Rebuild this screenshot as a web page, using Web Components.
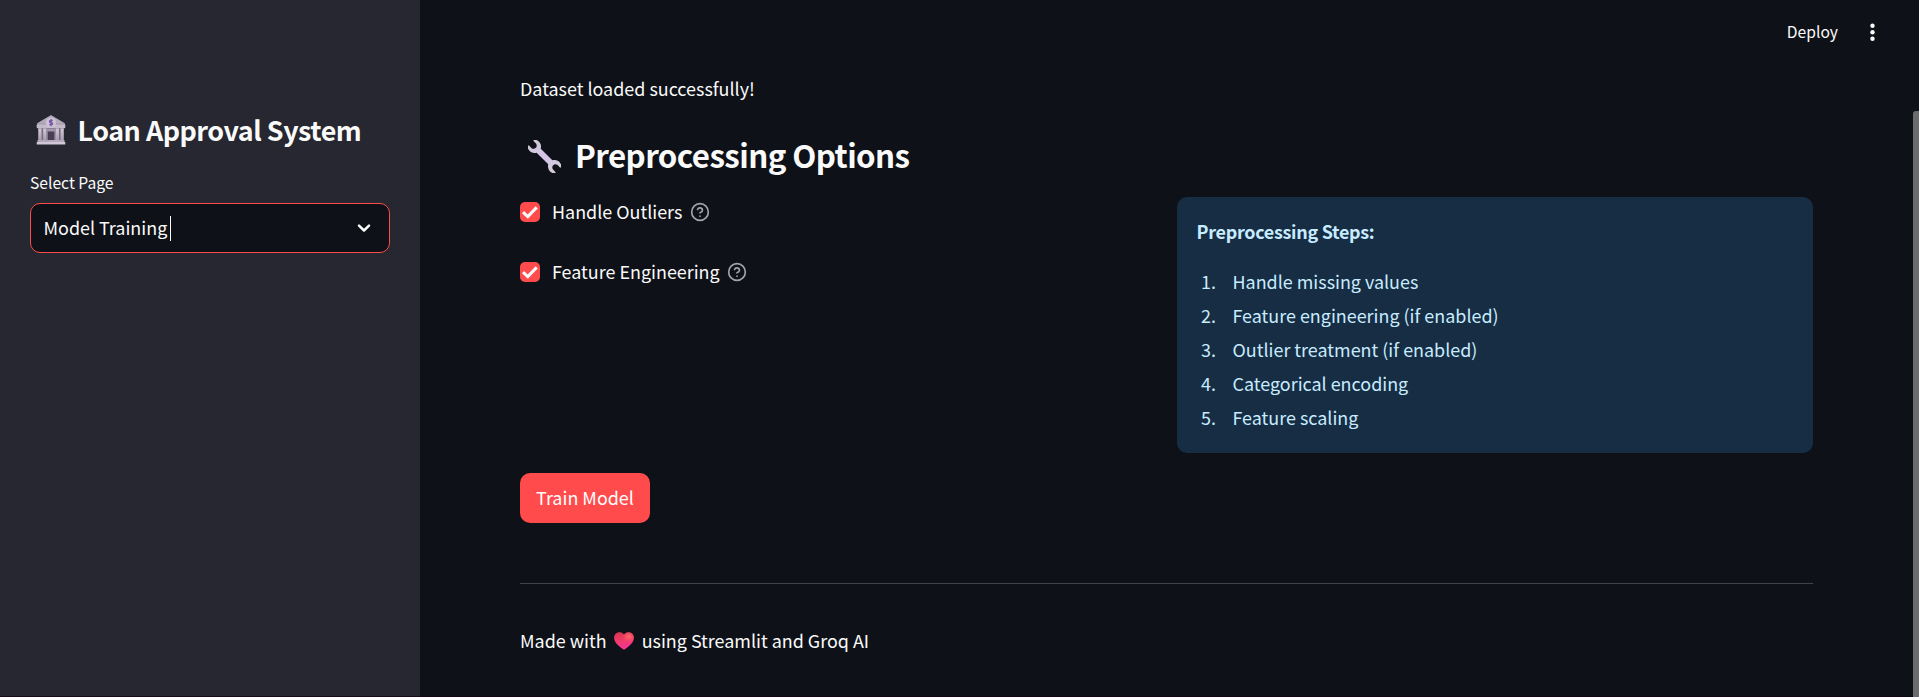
<!DOCTYPE html>
<html lang="en">
<head>
<meta charset="utf-8">
<title>Loan Approval System</title>
<style>
html,body{margin:0;height:100%;overflow:hidden;background:#0e1117}
body{font-family:"Noto Sans CJK SC","Noto Sans",sans-serif;color:#fafafa;font-size:17.930px}
</style>
</head>
<body>
<loan-app></loan-app>
<script>
const define = (name, html) => customElements.define(name, class extends HTMLElement {
  constructor() {
    super();
    const t = document.createElement('template');
    t.innerHTML = html;
    this.attachShadow({mode: 'open'}).append(t.content.cloneNode(true));
  }
});

define('bank-icon', `<style>:host{display:block;width:30px;height:32px}svg{display:block}</style>
<svg width="30" height="31" viewBox="0 0 30 31">
<defs><linearGradient id="g" x1="0" y1="0" x2="0" y2="1"><stop offset="0" stop-color="#d2cad8"/><stop offset="1" stop-color="#a79caf"/></linearGradient></defs>
<rect x="2" y="12" width="26" height="15" fill="#796d84"/>
<path d="M15 .2 29 8.600V12H1V8.600Z" fill="#a499ad"/>
<path d="M15 .2 29 8.600H1Z" fill="#b3a9ba"/>
<rect x=".7" y="9.500" width="28.600" height="3.700" rx=".8" fill="#c3bac9"/>
<circle cx="15" cy="7.600" r="5.200" fill="#cbc3d2"/>
<path d="M16.700 5.500h-2.200q-1 0-1 1t1 1.100h1q1 .1 1 1.100t-1 1h-2.200M15 4v7.200" fill="none" stroke="#7854a7" stroke-width="1.300"/>
<g fill="url(#g)"><rect x="2.500" y="13.500" width="3" height="12.500"/><rect x="7.200" y="13.500" width="3.200" height="12.500"/><rect x="19.700" y="13.500" width="3.200" height="12.500"/><rect x="24.600" y="13.500" width="3" height="12.500"/></g>
<rect x="10.400" y="14" width="9.300" height="12" fill="#a297aa"/>
<rect x="11.700" y="16.500" width="6.700" height="10" fill="#4a3d55"/>
<rect x="1.500" y="25" width="27" height="2.500" fill="#b3a9bb"/>
<rect x=".7" y="27" width="28.600" height="2.500" rx=".5" fill="#d0c8d6"/>
</svg>`);

define('wrench-icon', `<style>:host{display:block;width:33px;height:33px}svg{display:block}</style>
<svg width="33" height="33" viewBox="0 0 33 33">
<defs><linearGradient id="w" x1="0" y1="0" x2="1" y2="0"><stop offset="0" stop-color="#cfc9d6"/><stop offset=".5" stop-color="#d5c5ea"/><stop offset="1" stop-color="#d2ccd8"/></linearGradient></defs>
<g transform="rotate(45 16.500 16.500)" fill="url(#w)">
<path d="M-3 12.100C-1.500 10.300 1 9.600 3.600 10.100 5.900 10.600 7.300 11.900 8.300 13.600H24.700C25.700 11.900 27.200 10.600 29.400 10.100 32 9.600 34.500 10.300 36 12.100L35.500 13.300H31.500Q28.800 14.200 28.800 16.500T31.500 19.700H35.500L36 20.900C34.500 22.700 32 23.400 29.400 22.900 27.200 22.400 25.700 21.100 24.700 19.400H8.300C7.300 21.100 5.900 22.400 3.600 22.900 1 23.400 -1.500 22.700 -3 20.900L-2.500 19.700H1.500Q4.200 18.800 4.200 16.500T1.500 13.300H-2.500Z"/>
</g></svg>`);

define('heart-icon', `<style>:host{display:block;width:20px;height:18px}svg{display:block}</style>
<svg width="20" height="18" viewBox="0 0 20 18">
<defs><linearGradient id="h" x1=".3" y1="0" x2=".5" y2="1"><stop offset="0" stop-color="#d83550"/><stop offset=".5" stop-color="#f23c6b"/><stop offset="1" stop-color="#f92f9c"/></linearGradient>
<radialGradient id="s" cx=".75" cy=".25" r=".35"><stop offset="0" stop-color="#ff6b68"/><stop offset="1" stop-color="#ff5268" stop-opacity="0"/></radialGradient></defs>
<path d="M10 2.600C8.700.8 7.100.2 5.300.2 2.400.2.100 2.600.1 5.700c0 5 5 8.500 8.600 11.300q1.300 1 2.600 0C15 14.200 19.900 10.700 19.900 5.700 19.900 2.600 17.600.2 14.700.2 12.900.2 11.300.8 10 2.600Z" fill="url(#h)"/>
<path d="M10 2.600C8.700.8 7.100.2 5.300.2 2.400.2.100 2.600.1 5.700c0 5 5 8.500 8.600 11.300q1.300 1 2.600 0C15 14.200 19.900 10.700 19.900 5.700 19.900 2.600 17.600.2 14.700.2 12.900.2 11.300.8 10 2.600Z" fill="url(#s)"/>
</svg>`);

define('help-icon', `<style>:host{display:block;width:20px;height:20px}svg{display:block}</style>
<svg width="20" height="20" viewBox="0 0 24 24" fill="none" stroke="#a3a4a7" stroke-width="2" stroke-linecap="round" stroke-linejoin="round"><circle cx="12" cy="12" r="10"/><path d="M9.090 9a3 3 0 0 1 5.830 1c0 2-3 3-3 3"/><path d="M12 17h.01"/></svg>`);

define('page-select', `<style>
:host{display:block}
label{display:block;font-size:15.650px;line-height:26px;height:25px;padding-top:1px}
.box{box-sizing:border-box;height:50px;margin-top:8px;border:1px solid #ff4b4b;border-radius:10px;background:#0e1117;display:flex;align-items:center;padding:0 14px 0 12.500px}
.value{padding-bottom:2px}
.caret{width:1px;height:25px;background:#fafafa;margin-left:3px}
svg{margin-left:auto}
</style>
<label><slot name="label"></slot></label>
<div class="box"><span class="value"><slot></slot></span><span class="caret"></span>
<svg width="22" height="22" viewBox="0 0 22 22"><path d="M6 8.700 11 13.500 16 8.700" fill="none" stroke="#fafafa" stroke-width="2.500" stroke-linecap="round" stroke-linejoin="round"/></svg></div>`);

define('side-bar', `<style>
:host{display:block;box-sizing:border-box;width:420px;height:100%;background:#262730;padding:111px 30px 0}
h1{margin:0;display:flex;align-items:center;height:40px;gap:12px;padding-left:5.500px;font-size:26.900px;font-weight:600;line-height:40px;white-space:nowrap;letter-spacing:-.48px}
h1 span{padding-bottom:3px}
page-select{margin-top:18px}
</style>
<h1><bank-icon></bank-icon><span>Loan Approval System</span></h1>
<page-select><span slot="label">Select Page</span>Model Training</page-select>`);

define('check-option', `<style>
:host{display:flex;align-items:center;height:30px}
i{width:20px;height:20px;border-radius:5px;background:#ff4b4b;margin-right:12px}
.text{padding-bottom:2px}
svg{display:block}help-icon{margin-left:7.500px}
</style>
<i><svg width="20" height="20" viewBox="0 0 20 20"><path d="M3 10.200 7.800 14.600 16.700 5.400" fill="none" stroke="#fafafa" stroke-width="3"/></svg></i><span class="text"><slot></slot></span><help-icon></help-icon>`);

define('info-box', `<style>
:host{display:block;box-sizing:border-box;height:256px;border-radius:10px;background:#172d43;color:#c7ebff;padding:19px 19.500px}
b{display:block;font-weight:600;line-height:30px;height:30px;letter-spacing:-.28px}
ol{list-style:none;margin:18px 0 0;padding:0}
</style>
<b><slot name="title"></slot></b><ol><slot></slot></ol>`);

define('step-item', `<style>
:host{display:flex;line-height:34px;height:34px}
span{width:19.500px;margin-right:16.500px;text-align:right}
</style><span><slot name="n"></slot></span><slot></slot>`);

define('top-bar', `<style>
:host{position:absolute;top:0;right:6px;height:64px;display:flex;align-items:center;gap:28px;padding-right:34px;font-size:15.650px}
span{padding-bottom:1px}
svg{display:block}
</style><span>Deploy</span><svg width="13" height="20" viewBox="0 0 13 20" fill="#fafafa"><circle cx="6.500" cy="3.700" r="2.200"/><circle cx="6.500" cy="10.200" r="2.200"/><circle cx="6.500" cy="16.700" r="2.200"/></svg>`);

define('main-view', `<style>
:host{display:block;box-sizing:border-box;flex:1;padding:73px 100px 0;min-width:0}
p{margin:0;line-height:30px;height:30px}
h2{margin:31px 0 0;display:flex;align-items:center;height:44px;gap:14px;padding-left:8px;font-size:31.300px;font-weight:600;line-height:44px;letter-spacing:-.58px}
h2 span{padding-bottom:3px}
.cols{display:grid;grid-template-columns:1fr 636px;margin-top:19px}
.checks{display:flex;flex-direction:column;gap:30px}
button{display:block;margin:20px 0 0;width:130px;height:50px;border:0;border-radius:10px;background:#ff4b4b;color:#fff;font:inherit;padding:0 0 2px}
hr{border:0;height:1px;margin:60px 0 0;background:#404246}
.foot{display:flex;align-items:center;margin-top:42px}
.foot span{padding-bottom:3px}
heart-icon{margin:0 8px 0 7px}
</style>
<p>Dataset loaded successfully!</p>
<h2><wrench-icon></wrench-icon><span>Preprocessing Options</span></h2>
<div class="cols"><div class="checks"><check-option>Handle Outliers</check-option><check-option>Feature Engineering</check-option></div>
<info-box><span slot="title">Preprocessing Steps:</span>
<step-item><span slot="n">1.</span>Handle missing values</step-item>
<step-item><span slot="n">2.</span>Feature engineering (if enabled)</step-item>
<step-item><span slot="n">3.</span>Outlier treatment (if enabled)</step-item>
<step-item><span slot="n">4.</span>Categorical encoding</step-item>
<step-item><span slot="n">5.</span>Feature scaling</step-item></info-box></div>
<button>Train Model</button><hr>
<p class="foot"><span>Made with</span><heart-icon></heart-icon><span>using Streamlit and Groq AI</span></p>`);

define('scroll-bar', `<style>:host{display:block;width:6px;height:100%}div{margin-top:111px;height:600px;background:#6b6c70;border-radius:3px 0 0 0}</style><div></div>`);

define('loan-app', `<style>:host{display:flex;height:100vh;position:relative;overflow:hidden}
.edge{position:absolute;left:0;right:6px;bottom:0;height:1px;background:rgba(20,0,25,.75)}</style>
<side-bar></side-bar><main-view></main-view><top-bar></top-bar><scroll-bar></scroll-bar><div class="edge"></div>`);
</script>
</body>
</html>
